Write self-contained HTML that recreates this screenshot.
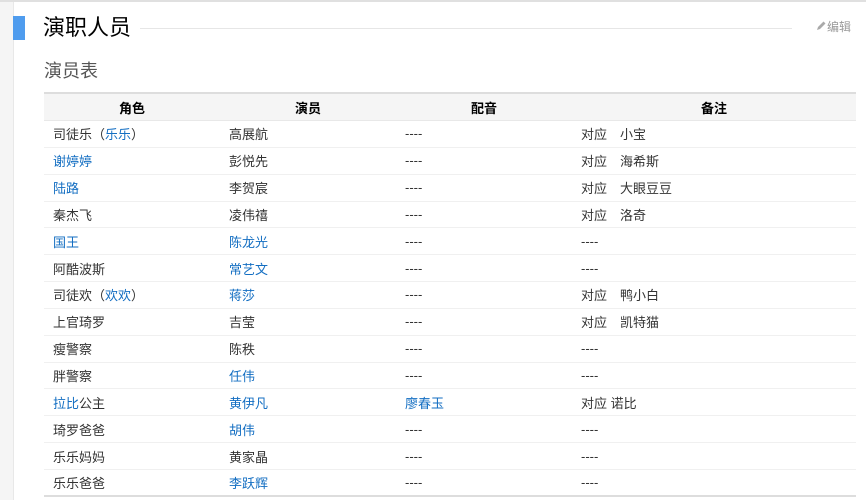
<!DOCTYPE html>
<html><head><meta charset="utf-8"><style>
body{margin:0;width:866px;height:500px;overflow:hidden;background:#fff;font-family:"Liberation Sans","Noto Sans CJK SC",sans-serif;color:#333;position:relative}
.side{position:absolute;left:0;top:0;width:13px;height:500px;background:#f5f5f5;border-right:1px solid #e8e8e8}
.topb{position:absolute;left:0;top:0;width:866px;height:2px;background:#e0e0e0}
.bar{position:absolute;left:13px;top:16px;width:12px;height:24px;background:#4f9cee}
.t1{position:absolute;left:43px;top:14px;font-size:22px;line-height:28px;color:#000}
.line{position:absolute;left:140px;top:28px;width:652px;height:1px;background:#e6e6e6}
.edit{position:absolute;left:815px;top:19px;font-size:12px;color:#999;line-height:16px}
.t2{position:absolute;left:44px;top:59px;font-size:18px;line-height:24px;color:#555}
table{position:absolute;left:44px;top:92px;width:812px;border-collapse:collapse;font-size:13px;border-top:2px solid #ddd;border-bottom:2px solid #ddd}
th{background:#f5f5f5;height:26px;font-weight:bold;color:#000;padding:0;border-bottom:1px solid #e8e8e8}
tr.r{height:26.85px}
td{padding:0 0 0 9px;border-bottom:1px solid #f0f0f0;color:#333}
tr:last-child td{border-bottom:none}
a{color:#136ec2;text-decoration:none}
</style></head><body>
<div class="side"></div><div class="topb"></div><div class="bar"></div>
<div class="t1">演职人员</div><div class="line"></div>
<div class="edit"><svg width="12" height="12" viewBox="0 0 12 12" style="vertical-align:-1px"><path d="M2 10 L3 7 L8.5 1.5 L10.5 3.5 L5 9 Z" fill="#aaa"/></svg>编辑</div>
<div class="t2">演员表</div>
<table>
<colgroup><col style="width:176px"><col style="width:176px"><col style="width:176px"><col style="width:284px"></colgroup>
<tr><th>角色</th><th>演员</th><th>配音</th><th>备注</th></tr>
<tr class="r"><td>司徒乐（<a>乐乐</a>）</td><td>高展航</td><td>----</td><td>对应　小宝</td></tr>
<tr class="r"><td><a>谢婷婷</a></td><td>彭悦先</td><td>----</td><td>对应　海希斯</td></tr>
<tr class="r"><td><a>陆路</a></td><td>李贺宸</td><td>----</td><td>对应　大眼豆豆</td></tr>
<tr class="r"><td>秦杰飞</td><td>凌伟禧</td><td>----</td><td>对应　洛奇</td></tr>
<tr class="r"><td><a>国王</a></td><td><a>陈龙光</a></td><td>----</td><td>----</td></tr>
<tr class="r"><td>阿酷波斯</td><td><a>常艺文</a></td><td>----</td><td>----</td></tr>
<tr class="r"><td>司徒欢（<a>欢欢</a>）</td><td><a>蒋莎</a></td><td>----</td><td>对应　鸭小白</td></tr>
<tr class="r"><td>上官琦罗</td><td>吉莹</td><td>----</td><td>对应　凯特猫</td></tr>
<tr class="r"><td>瘦警察</td><td>陈秩</td><td>----</td><td>----</td></tr>
<tr class="r"><td>胖警察</td><td><a>任伟</a></td><td>----</td><td>----</td></tr>
<tr class="r"><td><a>拉比</a>公主</td><td><a>黄伊凡</a></td><td><a>廖春玉</a></td><td>对应 诺比</td></tr>
<tr class="r"><td>琦罗爸爸</td><td><a>胡伟</a></td><td>----</td><td>----</td></tr>
<tr class="r"><td>乐乐妈妈</td><td>黄家晶</td><td>----</td><td>----</td></tr>
<tr class="r"><td>乐乐爸爸</td><td><a>李跃辉</a></td><td>----</td><td>----</td></tr>
</table>
</body></html>
